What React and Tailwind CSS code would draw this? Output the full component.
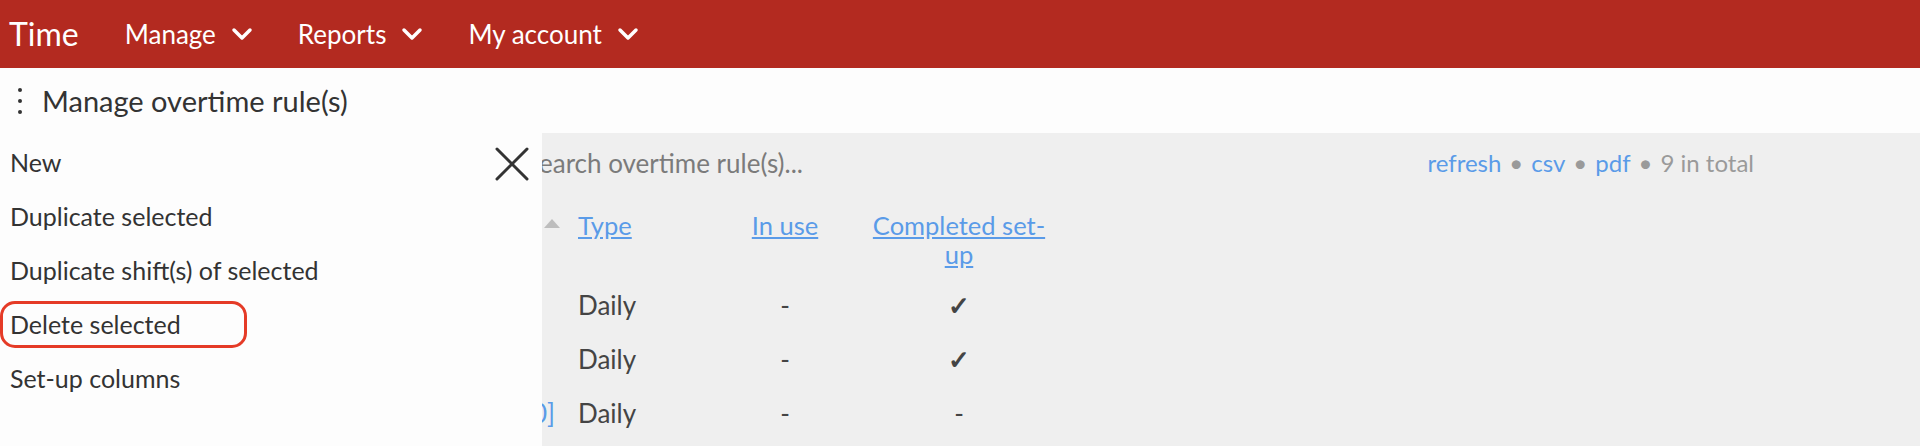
import React from 'react';

const navItems = ['Manage', 'Reports', 'My account'];
const menuItems = ['New', 'Duplicate selected', 'Duplicate shift(s) of selected', 'Delete selected', 'Set-up columns'];
const rows = [
  { name: 'Overtime rule 1', type: 'Daily', inUse: '-', done: true },
  { name: 'Overtime rule 2', type: 'Daily', inUse: '-', done: true },
  { name: '[Weekday overtime rule 10]', type: 'Daily', inUse: '-', done: false },
];

function Chevron() {
  return (
    <svg width="22" height="14" viewBox="0 0 22 14" fill="none" stroke="currentColor" strokeWidth="3.5" strokeLinecap="round" strokeLinejoin="round">
      <polyline points="3,3 11,11 19,3" />
    </svg>
  );
}

export default function App() {
  return (
    <div className="h-[446px] overflow-hidden bg-[#efefef] font-[Lato,sans-serif] text-[#333]">
      {/* top bar */}
      <header className="h-[68px] bg-[#b32a20] text-white flex items-center">
        <span className="pl-[9px] text-[32px] leading-none">Time</span>
        <nav className="flex items-center ml-[46px] gap-[45px] text-[26px]">
          {navItems.map(item => (
            <div key={item} className="flex items-center gap-[15px]">
              <span>{item}</span>
              <Chevron />
            </div>
          ))}
        </nav>
      </header>

      <div className="relative">
        <div className="h-[65px] bg-[#fdfdfd] flex items-center">
          <div className="flex flex-col items-center gap-[7px] w-[14px] ml-[13px]">
            <span className="w-[4px] h-[4px] rounded-full bg-[#333]" />
            <span className="w-[4px] h-[4px] rounded-full bg-[#333]" />
            <span className="w-[4px] h-[4px] rounded-full bg-[#333]" />
          </div>
          <h1 className="ml-[15px] text-[29px] text-[#333]">Manage overtime rule(s)</h1>
        </div>

        {/* list content */}
        <main>
          <div className="h-[60px] flex items-center">
            <input
              className="ml-[525px] w-[600px] bg-transparent outline-none text-[26px] placeholder:text-[#7b7b7b]"
              placeholder="Search overtime rule(s)..."
            />
            <div className="ml-auto mr-[166px] text-[24px] text-[#9a9a9a] flex items-center gap-[8px]">
              <a className="text-[#5a9be8]">refresh</a>
              <span>•</span>
              <a className="text-[#5a9be8]">csv</a>
              <span>•</span>
              <a className="text-[#5a9be8]">pdf</a>
              <span>•</span>
              <span>9 in total</span>
            </div>
          </div>

          <table className="table-fixed w-[1046px] mt-[18px] border-collapse text-[26px] text-[#444]">
            <colgroup>
              <col className="w-[568px]" />
              <col className="w-[130px]" />
              <col className="w-[174px]" />
              <col className="w-[174px]" />
            </colgroup>
            <thead>
              <tr className="align-top text-[25.5px]">
                <th className="font-normal text-left pb-[9px] leading-[29px]">
                  <div className="flex justify-end pr-[8px] pt-[8px]">
                    <span className="w-0 h-0 border-l-[8px] border-r-[8px] border-b-[9px] border-l-transparent border-r-transparent border-b-[#bdbdbd]" />
                  </div>
                </th>
                <th className="font-normal text-left pl-[10px] pb-[9px] leading-[29px]">
                  <a className="text-[#5a9be8] underline">Type</a>
                </th>
                <th className="font-normal text-center pb-[9px] leading-[29px]">
                  <a className="text-[#5a9be8] underline">In use</a>
                </th>
                <th className="font-normal text-center pb-[9px] leading-[29px]">
                  <a className="text-[#5a9be8] underline">Completed set-up</a>
                </th>
              </tr>
            </thead>
            <tbody>
              {rows.map(r => (
                <tr key={r.name} className="h-[54px]">
                  <td className="pl-[238px]">
                    <a className="text-[#5a9be8] whitespace-nowrap">{r.name}</a>
                  </td>
                  <td className="pl-[10px]">{r.type}</td>
                  <td className="text-center">{r.inUse}</td>
                  <td className="text-center">
                    {r.done ? <span className="font-bold">✓</span> : '-'}
                  </td>
                </tr>
              ))}
            </tbody>
          </table>
        </main>

        {/* actions drawer */}
        <aside className="absolute left-0 top-[65px] w-[542px] h-[400px] bg-[#fdfdfd] pt-[3px]">
          <button className="absolute left-[495px] top-[14px] w-[34px] h-[34px] text-[#333]">
            <svg width="34" height="34" viewBox="0 0 34 34" fill="none" stroke="currentColor" strokeWidth="3" strokeLinecap="round">
              <line x1="2" y1="2" x2="32" y2="32" />
              <line x1="32" y1="2" x2="2" y2="32" />
            </svg>
          </button>
          <ul className="text-[25px] text-[#333]">
            {menuItems.map(item => (
              <li key={item} className="relative h-[54px] flex items-center pl-[10px]">
                {item}
                {item === 'Delete selected' && (
                  <span className="absolute left-0 top-[3px] w-[247px] h-[47px] border-[3px] border-[#e53b27] rounded-[15px]" />
                )}
              </li>
            ))}
          </ul>
        </aside>
      </div>
    </div>
  );
}
